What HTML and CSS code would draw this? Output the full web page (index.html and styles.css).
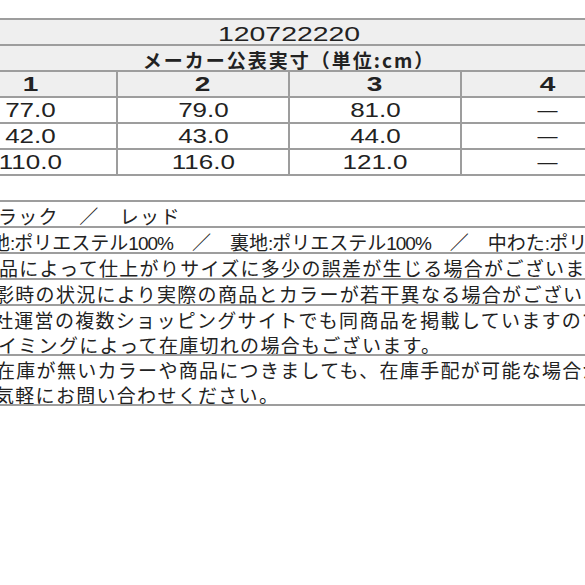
FILE: index.html
```html
<!DOCTYPE html>
<html lang="ja">
<head>
<meta charset="utf-8">
<link rel="stylesheet" href="styles.css">
</head>
<body>
<div class="page">
  <div class="sheet">
    <div class="row shade lowtext"><span class="num title">120722220</span></div>
    <div class="row shade lowtext"><span class="sub">メーカー公表実寸（単位:cm）</span></div>
    <div class="row shade grid4">
      <div class="cell"><span class="num bold">1</span></div>
      <div class="cell"><span class="num bold">2</span></div>
      <div class="cell"><span class="num bold">3</span></div>
      <div class="cell"><span class="num bold">4</span></div>
    </div>
    <div class="row grid4">
      <div class="cell"><span class="num">77.0</span></div>
      <div class="cell"><span class="num">79.0</span></div>
      <div class="cell"><span class="num">81.0</span></div>
      <div class="cell"><span class="dash">—</span></div>
    </div>
    <div class="row grid4">
      <div class="cell"><span class="num">42.0</span></div>
      <div class="cell"><span class="num">43.0</span></div>
      <div class="cell"><span class="num">44.0</span></div>
      <div class="cell"><span class="dash">—</span></div>
    </div>
    <div class="row grid4">
      <div class="cell"><span class="num">110.0</span></div>
      <div class="cell"><span class="num">116.0</span></div>
      <div class="cell"><span class="num">121.0</span></div>
      <div class="cell"><span class="dash">—</span></div>
    </div>
  </div>

  <div class="notes">
    <div class="line"><div class="tx o2">ラック　／　レッド</div></div>
    <div class="line tight"><div class="tx o9">地<span class="hw">:</span>ポリエステル<span class="hw">100%</span>　／　裏地<span class="hw">:</span>ポリエステル<span class="hw">100%</span>　／　中わた<span class="hw">:</span>ポリエステル<span class="hw">100%</span></div></div>
    <div class="line"><div class="tx o1">品によって仕上がりサイズに多少の誤差が生じる場合がございます。</div></div>
    <div class="line"><div class="tx o5">影時の状況により実際の商品とカラーが若干異なる場合がございます。</div></div>
    <div class="line dbl">
      <div class="tx o6">社運営の複数ショッピングサイトでも同商品を掲載していますので、</div>
      <div class="tx o2">イミングによって在庫切れの場合もございます。</div>
    </div>
    <div class="line dbl">
      <div class="tx o4">在庫が無いカラーや商品につきましても、在庫手配が可能な場合がございます。</div>
      <div class="tx o5">気軽にお問い合わせください。</div>
    </div>
  </div>
</div>
</body>
</html>
```

FILE: styles.css
```css
* { box-sizing: border-box; }

html, body {
  margin: 0;
  padding: 0;
  background: #ffffff;
}

.page {
  width: 585px;
  height: 585px;
  overflow: hidden;
  padding-top: 18px;
  color: #222222;
  font-family: "Noto Sans CJK JP", "Noto Sans", sans-serif;
}

/* ---------- size table ---------- */
.sheet {
  margin-left: -55px;
  width: 688px;
  border-bottom: 2px solid #9d9d9d;
}

.row {
  height: 26px;
  border-top: 2px solid #9d9d9d;
  display: flex;
  align-items: center;
  justify-content: center;
}

.row.shade { background: #efefef; }

.row.lowtext { padding-top: 3px; }

.grid4 {
  display: grid;
  grid-template-columns: 171px 172px 172px 173px;
  align-items: stretch;
}

.cell {
  display: flex;
  align-items: center;
  justify-content: center;
  border-left: 2px solid #9d9d9d;
}

.cell:first-child { border-left: 0; }

.num {
  display: inline-block;
  font-family: "Liberation Sans", Arial, sans-serif;
  font-size: 20px;
  line-height: 1;
  transform: scaleX(1.3);
}

.num.title { transform: scaleX(1.42); }

.num.bold {
  font-weight: 700;
  transform: scaleX(1.4);
}

.dash {
  font-family: "Liberation Sans", Arial, sans-serif;
  font-size: 20px;
  line-height: 1;
}

.sub {
  font-size: 19px;
  font-weight: 700;
  letter-spacing: 2px;
  line-height: 1;
}

/* ---------- notes ---------- */
.notes {
  margin-top: 24px;
  border-bottom: 2px solid #9d9d9d;
}

.line {
  height: 26px;
  border-top: 2px solid #9d9d9d;
  overflow: hidden;
  white-space: nowrap;
  font-size: 19px;
  letter-spacing: 1.3px;
  line-height: 21px;
  padding-top: 3px;
}

.line.tight { letter-spacing: 0; }

.line.dbl {
  height: 50px;
  line-height: 25px;
  padding-top: 1px;
}

.hw {
  font-family: "Liberation Sans", Arial, sans-serif;
  letter-spacing: -1px;
}

.o1 { margin-left: -1px; }
.o2 { margin-left: -2px; }
.o4 { margin-left: -4px; }
.o5 { margin-left: -5px; }
.o6 { margin-left: -6px; }
.o9 { margin-left: -9px; }
```
